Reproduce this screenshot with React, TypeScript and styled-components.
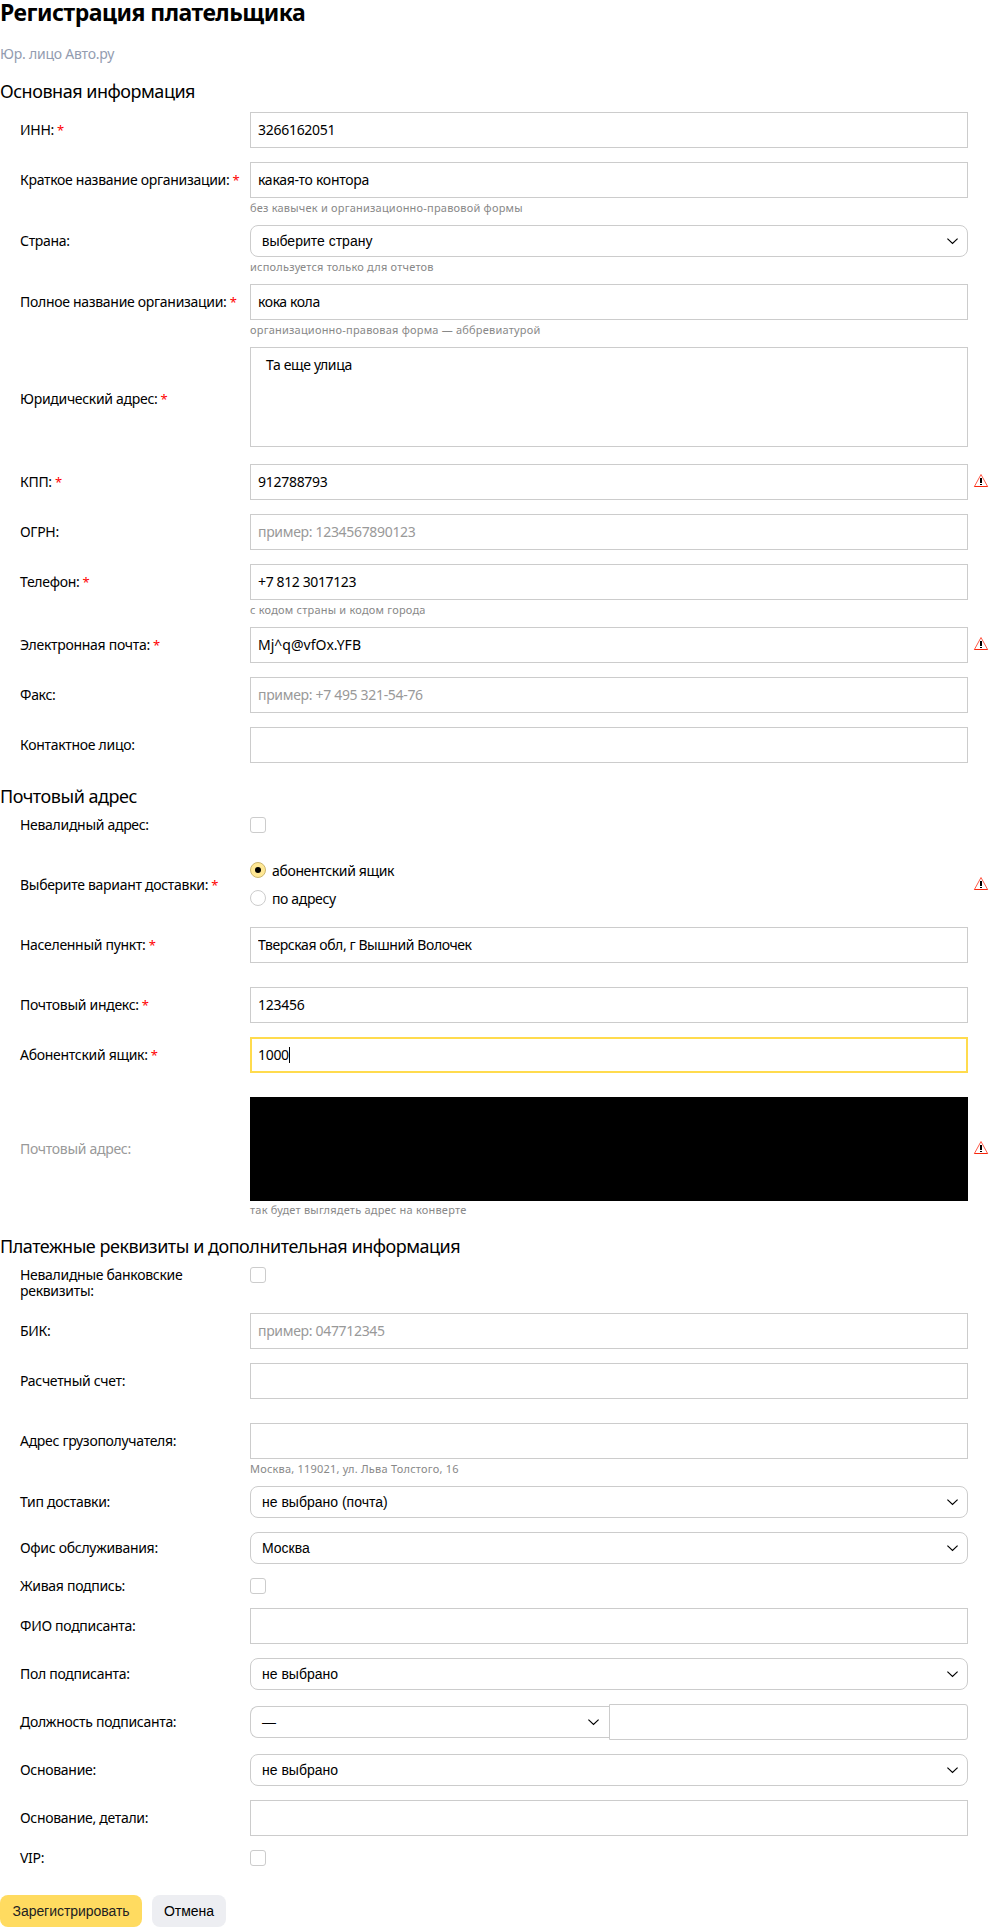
import React from 'react';
import styled, { createGlobalStyle, css } from 'styled-components';

const textFont = '"Noto Sans", "Open Sans", sans-serif';
const controlFont = '"Liberation Sans", Arial, sans-serif';

const GlobalStyle = createGlobalStyle`
  * { box-sizing: border-box; }
  body {
    margin: 0;
    background: #fff;
    color: #000;
    font: 14px/16px ${textFont};
    letter-spacing: -0.3px;
  }
`;

const Page = styled.main`
  display: flex;
  flex-direction: column;
  width: 1000px;
  height: 1928px;
`;

const Title = styled.h1`
  margin: 0;
  font-size: 23px;
  line-height: 24px;
  font-weight: 700;
  letter-spacing: -0.5px;
`;

const Subtitle = styled.p`
  margin: 22px 0 0;
  line-height: 16px;
  letter-spacing: -0.22px;
  color: #939cb0;
`;

const SectionTitle = styled.h2<{ $top: number; $bottom: number }>`
  margin: ${p => p.$top}px 0 ${p => p.$bottom}px;
  font-size: 18px;
  line-height: 22px;
  font-weight: 400;
  letter-spacing: -0.48px;
`;

const Rows = styled.div`
  display: flex;
  flex-direction: column;
  gap: 14px;
`;

const FormRow = styled.div<{ $top?: number; $bottom?: number }>`
  display: grid;
  grid-template-columns: 230px 718px 1fr;
  align-items: center;
  padding: ${p => p.$top ?? 0}px 0 ${p => p.$bottom ?? 0}px 20px;
`;

const Label = styled.label<{ $muted?: boolean }>`
  color: ${p => (p.$muted ? '#999' : '#000')};
`;

const Star = styled.span`
  color: #f00;
  font-size: 13px;
`;

const Control = styled.div<{ $height?: number }>`
  display: flex;
  flex-direction: column;
  align-items: flex-start;
  height: ${p => (p.$height ? `${p.$height}px` : 'auto')};
`;

const Hint = styled.div`
  grid-column: 2;
  height: 13px;
  padding-top: 2px;
  font-size: 11px;
  line-height: 16px;
  letter-spacing: 0.21px;
  color: #888;
  white-space: nowrap;
`;

const field = css`
  width: 100%;
  border: 1px solid #ccc;
  border-radius: 0;
  background: #fff;
  color: #000;
  font: 14px/16px ${textFont};
  outline: none;
`;

const tracking = { text: '-0.42px', short: '-0.28px', phone: '-0.38px', none: '0' };

const TextInput = styled.input<{ $tracking?: keyof typeof tracking }>`
  ${field}
  height: 36px;
  padding: 0 7px 2px;
  letter-spacing: ${p => tracking[p.$tracking ?? 'text']};
  &::placeholder {
    color: #999;
    opacity: 1;
    letter-spacing: -0.32px;
  }
`;

const FocusedInput = styled.div`
  ${field}
  display: flex;
  align-items: center;
  height: 36px;
  padding: 0 6px;
  border: 2px solid #ffdb4d;
`;

const Caret = styled.span`
  width: 1px;
  height: 16px;
  background: #000;
`;

const TextArea = styled.textarea`
  ${field}
  display: block;
  height: 100px;
  padding: 9px 15px;
  letter-spacing: -0.34px;
  resize: none;
`;

const Envelope = styled.div`
  flex: none;
  width: 100%;
  height: 104px;
  background: #000;
`;

const SelectBox = styled.button<{ $joined?: boolean }>`
  display: flex;
  align-items: center;
  justify-content: space-between;
  width: ${p => (p.$joined ? '359px' : '100%')};
  height: 32px;
  padding: 0 ${p => (p.$joined ? 10 : 9)}px 0 11px;
  border: 1px solid #ccc;
  border-right-width: ${p => (p.$joined ? 0 : 1)}px;
  border-radius: ${p => (p.$joined ? '8px 0 0 8px' : '8px')};
  background: #fff;
  color: #000;
  font: 14px/16px ${controlFont};
`;

const SplitControl = styled.div`
  display: flex;
  align-items: center;
  width: 100%;
`;

const JoinedInput = styled(TextInput)`
  flex: 1;
  width: auto;
  min-width: 0;
  border-radius: 0 3px 3px 0;
`;

const Checkbox = styled.span`
  width: 16px;
  height: 16px;
  border: 1px solid #ccc;
  border-radius: 3px;
  background: #fff;
`;

const RadioGroup = styled.div`
  display: flex;
  flex-direction: column;
  gap: 12px;
`;

const RadioOption = styled.label`
  display: flex;
  align-items: flex-start;
  gap: 6px;
  height: 16px;
  line-height: 18px;
  letter-spacing: -0.36px;
`;

const RadioMark = styled.span<{ $checked?: boolean }>`
  display: flex;
  align-items: center;
  justify-content: center;
  width: 16px;
  height: 16px;
  border: 1px solid ${p => (p.$checked ? '#ccb66e' : '#ccc')};
  border-radius: 50%;
  background: ${p => (p.$checked ? '#ffe895' : '#fff')};
  &::after {
    content: '';
    display: ${p => (p.$checked ? 'block' : 'none')};
    width: 6px;
    height: 6px;
    border-radius: 50%;
    background: #000;
  }
`;

const WarningSlot = styled.span`
  display: flex;
  height: 18px;
  padding-left: 5px;
`;

const Actions = styled.div`
  display: flex;
  gap: 10px;
  margin-top: 29px;
`;

const ActionButton = styled.button<{ $primary?: boolean }>`
  width: ${p => (p.$primary ? 142 : 74)}px;
  height: 32px;
  padding: 0;
  border: 0;
  border-radius: 8px;
  background: ${p => (p.$primary ? '#ffdb60' : '#edeef2')};
  color: ${p => (p.$primary ? '#222' : '#000')};
  font: 14px/16px ${controlFont};
  letter-spacing: -0.05px;
`;

const Warning = () => (
  <WarningSlot>
    <svg width="16" height="16" viewBox="0 0 16 16">
      <path d="M8 1.5 14.6 13.5H1.4Z" fill="#fff" stroke="#ff5a48" strokeLinejoin="round" />
      <path d="M1.5 13.5h13" stroke="#f9270c" />
      <path d="M7 5h2v5H7zM7 11h2v1H7z" fill="#000" />
    </svg>
  </WarningSlot>
);

const Chevron = () => (
  <svg width="11" height="7" viewBox="0 0 11 7">
    <path d="M0.4 0.6 5.5 5.5 10.6 0.6" fill="none" stroke="#000" strokeWidth="1.2" />
  </svg>
);

type RowProps = {
  label: string;
  required?: boolean;
  muted?: boolean;
  warning?: boolean;
  hint?: string;
  top?: number;
  bottom?: number;
  height?: number;
  children: React.ReactNode;
};

const Row = ({ label, required, muted, warning, hint, top, bottom, height, children }: RowProps) => (
  <FormRow $top={top} $bottom={bottom}>
    <Label $muted={muted}>
      {label}
      {required && <Star> *</Star>}
    </Label>
    <Control $height={height}>{children}</Control>
    {warning ? <Warning /> : <span />}
    {hint && <Hint>{hint}</Hint>}
  </FormRow>
);

const Select = ({ value, joined }: { value: string; joined?: boolean }) => (
  <SelectBox type="button" $joined={joined}>
    {value}
    <Chevron />
  </SelectBox>
);

export default function App() {
  return (
    <Page>
      <GlobalStyle />
      <Title>Регистрация плательщика</Title>
      <Subtitle>Юр. лицо Авто.ру</Subtitle>

      <SectionTitle $top={18} $bottom={10}>Основная информация</SectionTitle>
      <Rows>
        <Row label="ИНН:" required><TextInput $tracking="short" defaultValue="3266162051" /></Row>
        <Row label="Краткое название организации:" required hint="без кавычек и организационно-правовой формы">
          <TextInput $tracking="short" defaultValue="какая-то контора" />
        </Row>
        <Row label="Страна:" hint="используется только для отчетов"><Select value="выберите страну" /></Row>
        <Row label="Полное название организации:" required hint="организационно-правовая форма — аббревиатурой">
          <TextInput defaultValue="кока кола" />
        </Row>
        <Row label="Юридический адрес:" required height={103}><TextArea defaultValue="Та еще улица" /></Row>
        <Row label="КПП:" required warning><TextInput $tracking="short" defaultValue="912788793" /></Row>
        <Row label="ОГРН:"><TextInput placeholder="пример: 1234567890123" /></Row>
        <Row label="Телефон:" required hint="с кодом страны и кодом города"><TextInput $tracking="phone" defaultValue="+7 812 3017123" /></Row>
        <Row label="Электронная почта:" required warning><TextInput $tracking="none" defaultValue="Mj^q@vfOx.YFB" /></Row>
        <Row label="Факс:"><TextInput placeholder="пример: +7 495 321-54-76" /></Row>
        <Row label="Контактное лицо:"><TextInput /></Row>
      </Rows>

      <SectionTitle $top={22} $bottom={10}>Почтовый адрес</SectionTitle>
      <Rows>
        <Row label="Невалидный адрес:"><Checkbox /></Row>
        <Row label="Выберите вариант доставки:" required warning top={15} bottom={5} height={46}>
          <RadioGroup>
            <RadioOption><RadioMark $checked />абонентский ящик</RadioOption>
            <RadioOption><RadioMark />по адресу</RadioOption>
          </RadioGroup>
        </Row>
        <Row label="Населенный пункт:" required><TextInput defaultValue="Тверская обл, г Вышний Волочек" /></Row>
        <Row label="Почтовый индекс:" required top={10}><TextInput $tracking="short" defaultValue="123456" /></Row>
        <Row label="Абонентский ящик:" required>
          <FocusedInput>1000<Caret /></FocusedInput>
        </Row>
        <Row label="Почтовый адрес:" muted warning top={10} bottom={1} height={103} hint="так будет выглядеть адрес на конверте"><Envelope /></Row>
      </Rows>

      <SectionTitle $top={21} $bottom={10}>Платежные реквизиты и дополнительная информация</SectionTitle>
      <Rows>
        <Row label="Невалидные банковские реквизиты:" height={32}><Checkbox /></Row>
        <Row label="БИК:"><TextInput placeholder="пример: 047712345" /></Row>
        <Row label="Расчетный счет:"><TextInput /></Row>
        <Row label="Адрес грузополучателя:" top={10} hint="Москва, 119021, ул. Льва Толстого, 16"><TextInput /></Row>
        <Row label="Тип доставки:"><Select value="не выбрано (почта)" /></Row>
        <Row label="Офис обслуживания:"><Select value="Москва" /></Row>
        <Row label="Живая подпись:"><Checkbox /></Row>
        <Row label="ФИО подписанта:"><TextInput /></Row>
        <Row label="Пол подписанта:"><Select value="не выбрано" /></Row>
        <Row label="Должность подписанта:">
          <SplitControl>
            <Select value="—" joined />
            <JoinedInput />
          </SplitControl>
        </Row>
        <Row label="Основание:"><Select value="не выбрано" /></Row>
        <Row label="Основание, детали:"><TextInput /></Row>
        <Row label="VIP:"><Checkbox /></Row>
      </Rows>

      <Actions>
        <ActionButton type="button" $primary>Зарегистрировать</ActionButton>
        <ActionButton type="button">Отмена</ActionButton>
      </Actions>
    </Page>
  );
}
